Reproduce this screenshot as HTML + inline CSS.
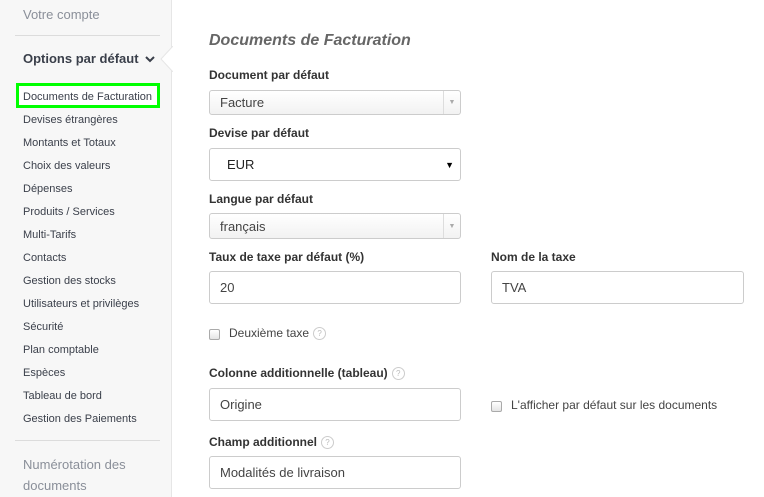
<!DOCTYPE html>
<html><head><meta charset="utf-8"><style>
*{box-sizing:border-box;margin:0;padding:0}
body{width:764px;height:497px;overflow:hidden;background:#fff;font-family:"Liberation Sans",Arial,sans-serif;position:relative;color:#333}
.sb{position:absolute;left:0;top:0;width:172px;height:497px;background:#f7f7f7;border-right:1px solid #e6e6e6}
.a{position:absolute;white-space:nowrap}
.it{position:absolute;left:23px;font-size:11px;color:#3a3f4a}
.hr{position:absolute;left:15px;width:145px;height:1px;background:#dcdcdc}
.lb{position:absolute;font-size:12px;font-weight:bold;color:#333;white-space:nowrap}
.in{position:absolute;border:1px solid #ccc;border-radius:3px;background:#fff;font-size:13px;color:#444;padding-left:10px;display:flex;align-items:center}
.sel{background:linear-gradient(#fff,#f2f2f2)}
.car{position:absolute;right:0;top:0;bottom:0;width:17px;border-left:1px solid #ddd;font-size:7px;color:#aaa;display:flex;align-items:center;justify-content:center}
.cb{position:absolute;width:11px;height:11px;border:1px solid #aaa;border-radius:2px;background:linear-gradient(#fff,#e4e4e4)}
.q{display:inline-block;width:13px;height:13px;border:1px solid #ccc;border-radius:50%;font-size:8px;color:#bbb;text-align:center;line-height:11px;font-weight:normal;vertical-align:middle;margin-left:4px}
</style></head><body>
<div class="sb"></div>
<svg class="a" style="left:160px;top:46px" width="14" height="26"><path d="M13 0 L1 13 L13 26" fill="#fff" stroke="#e6e6e6"/><rect x="13" y="0" width="1" height="26" fill="#fff"/></svg>
<div class="a" style="left:23px;top:7px;font-size:13px;color:#8a8f99">Votre compte</div>
<div class="hr" style="top:35px"></div>
<div class="a" style="left:23px;top:51px;font-size:13px;font-weight:bold;color:#3a3f4a">Options par défaut <svg width="10" height="8" style="margin-left:3px"><path d="M1 2 L5 6 L9 2" stroke="#3a3f4a" stroke-width="2" fill="none"/></svg></div>
<div class="a" style="left:16px;top:83px;width:144px;height:25px;border:3px solid #00ff00;background:#fff"></div>
<div class="it" style="top:91px">Documents de Facturation</div>
<div class="it" style="top:114px">Devises étrangères</div>
<div class="it" style="top:137px">Montants et Totaux</div>
<div class="it" style="top:160px">Choix des valeurs</div>
<div class="it" style="top:183px">Dépenses</div>
<div class="it" style="top:206px">Produits / Services</div>
<div class="it" style="top:229px">Multi-Tarifs</div>
<div class="it" style="top:252px">Contacts</div>
<div class="it" style="top:275px">Gestion des stocks</div>
<div class="it" style="top:298px">Utilisateurs et privilèges</div>
<div class="it" style="top:321px">Sécurité</div>
<div class="it" style="top:344px">Plan comptable</div>
<div class="it" style="top:367px">Espèces</div>
<div class="it" style="top:390px">Tableau de bord</div>
<div class="it" style="top:413px">Gestion des Paiements</div>
<div class="hr" style="top:440px"></div>
<div class="a" style="left:23px;top:454px;font-size:13px;color:#8a8f99;line-height:21px">Numérotation des<br>documents</div>

<div class="a" style="left:209px;top:32px;font-size:16px;font-weight:bold;font-style:italic;color:#666">Documents de Facturation</div>
<div class="lb" style="left:209px;top:68px">Document par défaut</div>
<div class="in sel" style="left:209px;top:90px;width:252px;height:25px">Facture<div class="car">▼</div></div>
<div class="lb" style="left:209px;top:126px">Devise par défaut</div>
<div class="in" style="left:209px;top:148px;width:252px;height:33px;padding-left:17px;color:#222">EUR<span style="position:absolute;right:6px;font-size:9px;color:#000">▼</span></div>
<div class="lb" style="left:209px;top:192px">Langue par défaut</div>
<div class="in sel" style="left:209px;top:213px;width:252px;height:26px">français<div class="car">▼</div></div>
<div class="lb" style="left:209px;top:250px">Taux de taxe par défaut (%)</div>
<div class="in" style="left:209px;top:271px;width:252px;height:33px">20</div>
<div class="lb" style="left:491px;top:250px">Nom de la taxe</div>
<div class="in" style="left:491px;top:271px;width:253px;height:33px">TVA</div>
<div class="cb" style="left:209px;top:329px"></div>
<div class="a" style="left:229px;top:326px;font-size:12px;color:#444">Deuxième taxe<span class="q">?</span></div>
<div class="lb" style="left:209px;top:366px">Colonne additionnelle (tableau)<span class="q">?</span></div>
<div class="in" style="left:209px;top:388px;width:252px;height:33px">Origine</div>
<div class="cb" style="left:491px;top:401px"></div>
<div class="a" style="left:511px;top:398px;font-size:12px;color:#444">L'afficher par défaut sur les documents</div>
<div class="lb" style="left:209px;top:435px">Champ additionnel<span class="q">?</span></div>
<div class="in" style="left:209px;top:456px;width:252px;height:33px">Modalités de livraison</div>
</body></html>
